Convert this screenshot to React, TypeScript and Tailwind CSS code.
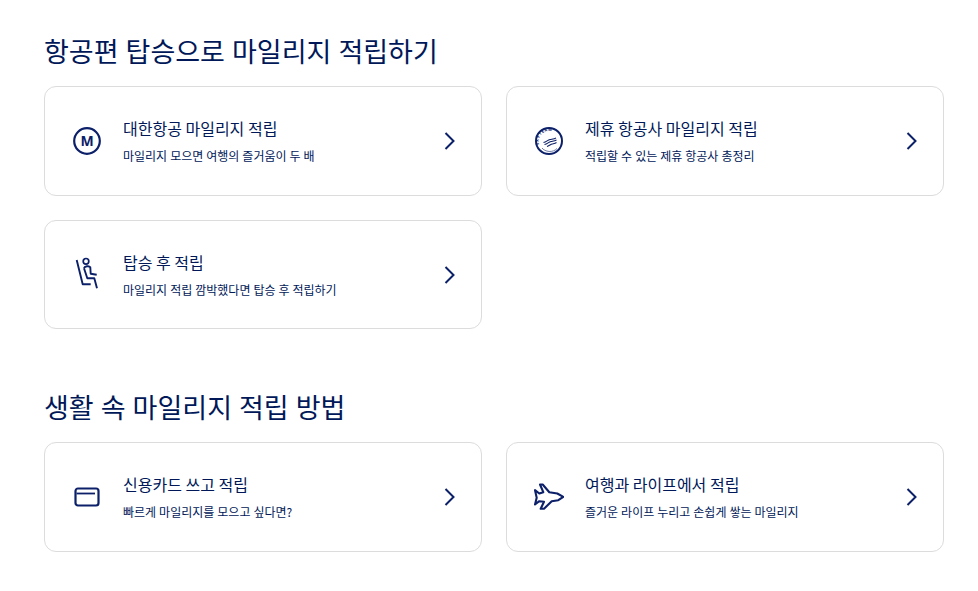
import React from 'react';

const MileageIcon = () => (
  <svg viewBox="0 0 30 30" className="w-[30px] h-[30px]" fill="none">
    <circle cx="15" cy="15" r="12.8" stroke="#0c2069" strokeWidth="2.2" />
    <text x="15" y="20" textAnchor="middle" fontSize="14" fontWeight="700" fill="#0c2069" fontFamily="'Noto Sans', sans-serif">M</text>
  </svg>
);

const SkyteamIcon = () => (
  <svg viewBox="0 0 30 30" className="w-[30px] h-[30px]" fill="none">
    <circle cx="15" cy="15" r="13" stroke="#0c2069" strokeWidth="2" />
    <defs>
      <path id="skyteam-arc" d="M5.500 19.500A10.500 10.500 0 0 1 25 11.500" />
    </defs>
    <text fontSize="4" fontWeight="700" fill="#0c2069" letterSpacing="0.6" fontFamily="'Noto Sans', sans-serif">
      <textPath href="#skyteam-arc" startOffset="1">SKYTEAM</textPath>
    </text>
    <path d="M9.500 16.500c3-.5 4-2.500 6.500-3s4-.5 6-1.500M10.500 18.500c3-.5 4-2.500 6.500-3s3.500-.5 5.500-1.500M13 20.500c2-.5 3-2 5-2.500s3-.5 4.500-1.500" stroke="#0c2069" strokeWidth="1.100" />
    <path d="M8 22c3 4 11 5 15 .5" stroke="#0c2069" strokeWidth="0.600" />
  </svg>
);

const SeatIcon = () => (
  <svg viewBox="0 0 30 30" className="w-[30px] h-[30px] overflow-visible" fill="none" stroke="#0c2069" strokeWidth="1.900" strokeLinejoin="round">
    <path d="M4.700 0 10.700 24.300h8" />
    <circle cx="14" cy="1.300" r="2.800" strokeWidth="1.700" />
    <path d="M12 8.300c.5-2 5-3 6.300-1l.4 6.500 6 1" />
    <path d="M12 8.300 15.300 18.300h7L25 28.300" />
  </svg>
);

const CardIcon = () => (
  <svg viewBox="0 0 30 30" className="w-[30px] h-[30px]" fill="none" stroke="#0c2069">
    <rect x="3.500" y="6.500" width="23" height="17" rx="2.500" strokeWidth="2.200" />
    <path d="M4.500 11.500h18.500" strokeWidth="1.800" />
  </svg>
);

const PlaneIcon = () => (
  <svg viewBox="0 0 30 30" className="w-[30px] h-[30px]" fill="none" stroke="#0c2069" strokeWidth="2.100" strokeLinejoin="round">
    <path d="M29.300 14.800 23.300 11.500 15.300 10.200 8.700 2.500H6L9.300 10.200 5.300 11.500 1 8.200 2.700 15.800 1 22.500 5.300 19.200 10 19.800 6.700 26.800H10L17.700 19.200 24.300 18.200z" />
  </svg>
);

const Chevron = () => (
  <svg viewBox="0 0 24 24" className="w-[24px] h-[24px] shrink-0" fill="none" stroke="#0c2069" strokeWidth="2">
    <path d="M8.500 4 16.500 12 8.500 20" />
  </svg>
);

const Item = ({ icon, title, desc }: { icon: React.ReactNode; title: string; desc: string }) => (
  <a className="flex items-center h-[109.500px] border border-[#dcdcdc] rounded-xl pl-[27px] pr-[20px] bg-white">
    <div className="w-[30px] shrink-0">{icon}</div>
    <div className="flex-1 ml-[21px] mb-[1px]">
      <p className="text-[16px] leading-[22px] text-[#001858]">{title}</p>
      <p className="mt-[9px] text-[12px] leading-[16px] [word-spacing:0.3px] text-[#001858]">{desc}</p>
    </div>
    <Chevron />
  </a>
);

export default function App() {
  return (
    <div className="min-h-screen bg-white pl-[44px] pr-[34px] pt-[32px] font-['Noto_Sans_CJK_KR','Noto_Sans',sans-serif]">
      <h2 className="text-[27px] leading-[38px] [word-spacing:1px] text-[#001858] mb-[16.300px]">항공편 탑승으로 마일리지 적립하기</h2>
      <div className="grid grid-cols-2 gap-[24px]">
        <Item icon={<MileageIcon />} title="대한항공 마일리지 적립" desc="마일리지 모으면 여행의 즐거움이 두 배" />
        <Item icon={<SkyteamIcon />} title="제휴 항공사 마일리지 적립" desc="적립할 수 있는 제휴 항공사 총정리" />
        <Item icon={<SeatIcon />} title="탑승 후 적립" desc="마일리지 적립 깜박했다면 탑승 후 적립하기" />
      </div>
      <h2 className="text-[27px] leading-[38px] [word-spacing:1px] text-[#001858] mt-[59px] mb-[16px]">생활 속 마일리지 적립 방법</h2>
      <div className="grid grid-cols-2 gap-[24px]">
        <Item icon={<CardIcon />} title="신용카드 쓰고 적립" desc="빠르게 마일리지를 모으고 싶다면?" />
        <Item icon={<PlaneIcon />} title="여행과 라이프에서 적립" desc="즐거운 라이프 누리고 손쉽게 쌓는 마일리지" />
      </div>
    </div>
  );
}
